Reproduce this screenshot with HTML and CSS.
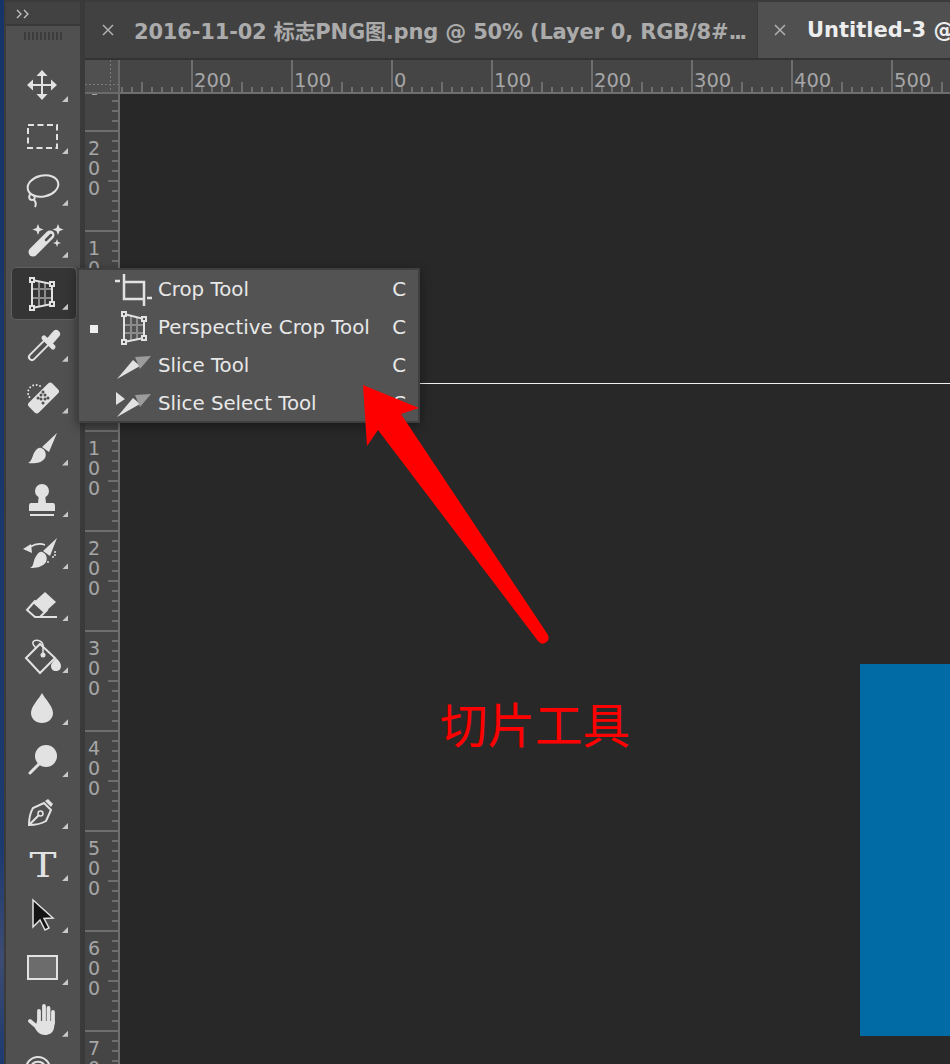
FILE: index.html

```html
<!DOCTYPE html>
<html lang="en">
<head>
    <meta charset="UTF-8">
    <title>Photoshop - Slice Tool</title>
    <link rel="stylesheet" href="styles.css">
</head>
<body>
    <div class="desktop-edge"></div>

    <aside class="toolbar">
        <div class="toolbar-head"><svg class="collapse" viewBox="0 0 14 10"><path d="M1 1l4 4-4 4M8 1l4 4-4 4"/></svg></div>
        <div class="grip"></div>
        <div class="tools">
            <div class="tool"><svg viewBox="0 0 52 52"><path class="s" d="M25 14v24M13 26h24"/><path class="f" d="M25 11l5.500 6h-11zM25 41l5.500-6h-11zM10 26l6-5.500v11zM40 26l-6-5.500v11z"/></svg></div>
            <div class="tool"><svg viewBox="0 0 52 52"><rect class="s dash" x="11" y="14" width="29" height="23"/></svg></div>
            <div class="tool"><svg viewBox="0 0 52 52"><ellipse class="s" cx="26" cy="23" rx="15.500" ry="10.500" transform="rotate(-12 26 23)"/><path class="s" d="M14 31c-3 2-2 6 1 6s4-3 1-5M17 37c2 2 2 5 1 7"/></svg></div>
            <div class="tool"><svg viewBox="0 0 52 52"><path class="s thick" d="M16 37l17-17"/><path class="s slit" d="M29 25l5-5"/><path class="f" d="M21 9l1.500 4 4 1.500-4 1.500-1.500 4-1.500-4-4-1.500 4-1.500zM41 9l1.500 4 4 1.500-4 1.500-1.500 4-1.500-4-4-1.500 4-1.500zM40 24l1 3 3 1-3 1-1 3-1-3-3-1 3-1z"/></svg></div>
            <div class="tool active"><svg viewBox="0 0 52 52"><path class="s grid" d="M22 15v24M28 16v22M15 22h20M15 31h20"/><path class="s" d="M15 13l20 4v20l-20 4z"/><path class="s handle" d="M13 11h4v4h-4zM33 15h4v4h-4zM33 35h4v4h-4zM13 39h4v4h-4z"/></svg></div>
            <div class="tool"><svg viewBox="0 0 52 52"><path class="s tube" d="M15 38l15-15"/><path class="s tube-in" d="M15 38l15-15"/><path class="s bulb" d="M33 22l6-7"/><path class="s collar" d="M27 19l9 9"/></svg></div>
            <div class="tool"><svg viewBox="0 0 52 52"><path class="s dots" d="M23 15a8 8 0 0 0-12 6c0 3 1 5 3 7"/><rect class="f" x="10" y="20" width="33" height="14" rx="3" transform="rotate(-45 26.500 27)"/><path class="s pips" d="M24 24h.01M28 28h.01M24 28h.01M28 24h.01M21 27h.01M31 27h.01M26 21h.01M26 32h.01"/></svg></div>
            <div class="tool"><svg viewBox="0 0 52 52"><path class="f" d="M40 10L32 29l-7-5zM24 25c4 1 6 6 4 10-3 5-11 6-17 5 4-2 4-6 6-10 2-3 4-6 7-5z"/></svg></div>
            <div class="tool"><svg viewBox="0 0 52 52"><circle class="f" cx="25" cy="17" r="7"/><path class="f" d="M22 20h6l1 9h-8zM14 29h22q2 0 2 3v5H12v-5q0-3 2-3zM13 40h24v2H13z"/></svg></div>
            <div class="tool"><svg viewBox="0 0 52 52"><path class="f" d="M40 12L33 30l-7-5zM25 26c4 1 6 6 4 10-3 5-10 6-16 6 4-2 3-6 5-10 2-3 4-7 7-6zM6 23l8-5 1 9z"/><path class="s thin" d="M13 21q8-5 15-2"/><path class="s dots" d="M38 26v.01M36 31v.01M31 36v.01M38 29v.01"/></svg></div>
            <div class="tool"><svg viewBox="0 0 52 52"><path class="f" d="M28 14l11 10-12 11-11-10z"/><path class="s" d="M18 23l-8 9 8 7h5l7-7zM21 39h19"/></svg></div>
            <div class="tool"><svg viewBox="0 0 52 52"><path class="s" d="M9 28l14-14 15 14-15 15z"/><path class="s thin" d="M26 25V15c-1-5-8-6-10-3-1 2 1 4 3 6"/><circle class="f" cx="26" cy="25" r="2.500"/><path class="f" d="M39 28c3 3 5 5 5 8s-2 5-5 5-5-2-5-5 3-5 5-8z"/></svg></div>
            <div class="tool"><svg viewBox="0 0 52 52"><path class="f" d="M25 11c3 6 11 13 11 20 0 6-5 10-11 10s-11-4-11-10c0-7 8-14 11-20z"/></svg></div>
            <div class="tool"><svg viewBox="0 0 52 52"><circle class="f" cx="29" cy="22" r="11"/><path class="s handle-l" d="M22 30l-9 9"/></svg></div>
            <div class="tool"><svg viewBox="0 0 52 52"><path class="f" d="M28 15l3-2 5 5-2 3z"/><path class="s" d="M27 17l7 7-5 11c-5 3-11 4-17 4 0-6 1-12 4-17zM13 38l9-9"/><circle class="s thin" cx="23.500" cy="27.500" r="2.500"/></svg></div>
            <div class="tool"><svg viewBox="0 0 52 52"><text class="type-t" x="26" y="39" text-anchor="middle" textLength="27" lengthAdjust="spacingAndGlyphs">T</text></svg></div>
            <div class="tool"><svg viewBox="0 0 52 52"><path class="cursor" d="M16 10l20 18-9 .5 5 9.500-4 2-5-10-7 7z"/></svg></div>
            <div class="tool"><svg viewBox="0 0 52 52"><rect class="s shape" x="11" y="14" width="29" height="23"/></svg></div>
            <div class="tool"><svg viewBox="0 0 52 52"><path class="s finger" d="M22 28V17M27 27V12M31.500 27V14M36 29V18M13 27l7 6"/><path class="f" d="M20 27h18l-1 7c-1 5-5 7-9 7-5 0-8-3-10-7z"/></svg></div>
            <div class="tool"><svg viewBox="0 0 52 52"><circle class="s" cx="21" cy="23" r="12"/><path class="s" d="M14 20a8 8 0 0 1 14 0"/></svg></div>
        </div>
    </aside>

    <div class="dock-gap"></div>

    <main class="document">
        <div class="tabs">
            <div class="tab">
                <svg class="tab-close" viewBox="0 0 12 12"><path d="M1 1l10 10M11 1L1 11"/></svg>
                <span class="tab-title">2016-11-02 标志PNG图.png @ 50% (Layer 0, RGB/8#<span class="tab-dots">...</span></span>
            </div>
            <div class="tab current">
                <svg class="tab-close" viewBox="0 0 12 12"><path d="M1 1l10 10M11 1L1 11"/></svg>
                <span class="tab-title">Untitled-3 @</span>
            </div>
        </div>
        <div class="workspace">
            <div class="ruler-corner"></div>
            <div class="ruler-h">
                <span>200</span><span>100</span><span>0</span><span>100</span><span>200</span><span>300</span><span>400</span><span>500</span>
            </div>
            <div class="ruler-v">
                <i class="ruler-stub"></i>
                <span>2<br>0<br>0</span>
                <span>1<br>0<br>0</span>
                <span>0</span>
                <span>1<br>0<br>0</span>
                <span>2<br>0<br>0</span>
                <span>3<br>0<br>0</span>
                <span>4<br>0<br>0</span>
                <span>5<br>0<br>0</span>
                <span>6<br>0<br>0</span>
                <span>7<br>0</span>
            </div>
            <div class="canvas">
                <div class="guide"></div>
                <div class="blue-block"></div>
                <div class="note">切片工具</div>
            </div>
        </div>
    </main>

    <div class="flyout">
        <div class="fly-row">
            <i class="bullet"></i>
            <svg viewBox="0 0 38 38"><path class="s crop" d="M9 2v25h20M0 9h5M9 10h20v24M32 26h5"/></svg>
            <span class="fly-name">Crop Tool</span>
            <span class="fly-key">C</span>
        </div>
        <div class="fly-row">
            <i class="bullet on"></i>
            <svg viewBox="0 0 38 38"><path class="s grid" d="M16 6v24M22 7v22M9 15h20M9 23h20"/><path class="s" d="M9 4l20 5v19l-20 4z"/><path class="s handle" d="M7 2h4v4H7zM27 7h4v4h-4zM27 26h4v4h-4zM7 30h4v4H7z"/></svg>
            <span class="fly-name">Perspective Crop Tool</span>
            <span class="fly-key">C</span>
        </div>
        <div class="fly-row">
            <i class="bullet"></i>
            <svg viewBox="0 0 38 38"><path class="f" d="M2 31l16-19 7 6z"/><path class="wedge" d="M20 9l16-1-11 13z"/></svg>
            <span class="fly-name">Slice Tool</span>
            <span class="fly-key">C</span>
        </div>
        <div class="fly-row">
            <i class="bullet"></i>
            <svg viewBox="0 0 38 38"><path class="f" d="M2 31l16-19 7 6zM1 6l9 7-9 6z"/><path class="wedge" d="M20 9l16-1-11 13z"/></svg>
            <span class="fly-name">Slice Select Tool</span>
            <span class="fly-key">C</span>
        </div>
    </div>

    <svg class="red-arrow" viewBox="0 0 950 1064"><path d="M363 385l56 23-18 6 147 221q2 6-3 8-4 2-7-2L378 430l-11 16z"/></svg>
</body>
</html>
```

FILE: styles.css

```css
* {
    box-sizing: border-box;
}
html, body {
    height: 100%;
}
body {
    margin: 0;
    display: flex;
    overflow: hidden;
    background: #3b3b3b;
    font-family: "DejaVu Sans", "Noto Sans CJK SC", sans-serif;
}

.desktop-edge {
    width: 4px;
    margin-right: 2px;
    background: linear-gradient(#173468, #1d3a70 80%, #3d4c72 90%, #1d3a70);
}

/* tool strip */
.toolbar {
    width: 74px;
    background: #505050;
    display: flex;
    flex-direction: column;
    flex-shrink: 0;
}
.toolbar-head {
    height: 26px;
    flex-shrink: 0;
    padding: 7px 0 0 10px;
    background: #424242;
    border-top: 2px solid #3b3b3b;
    border-bottom: 2px solid #383838;
}
.collapse {
    display: block;
    width: 14px;
    height: 10px;
}
.collapse path {
    fill: none;
    stroke: #c4c4c4;
    stroke-width: 1.300;
}
.grip {
    height: 8px;
    width: 38px;
    flex-shrink: 0;
    margin: 6px 0 0 18px;
    background: repeating-linear-gradient(90deg, #3c3c3c 0 2px, transparent 2px 4px);
}
.tools {
    margin-top: 19px;
    flex-shrink: 0;
}
.tool {
    position: relative;
    height: 51.950px;
    display: flex;
    justify-content: center;
    align-items: center;
}
.tool svg {
    width: 52px;
    height: 52px;
    flex-shrink: 0;
}
.tool::after {
    content: "";
    position: absolute;
    right: 12px;
    bottom: 9px;
    width: 6px;
    height: 6px;
    background: #c8c8c8;
    clip-path: polygon(100% 0, 100% 100%, 0 100%);
}
.tool.active::before {
    content: "";
    position: absolute;
    left: 5px;
    top: 0;
    width: 64px;
    height: 51px;
    background: #353535;
    border: 1px solid #606060;
    border-radius: 5px;
}
.tool.active svg {
    position: relative;
}

/* svg pieces */
.f {
    fill: #e2e2e2;
}
.s {
    fill: none;
    stroke: #e2e2e2;
    stroke-width: 2;
}
.s.thin {
    stroke-width: 1.500;
}
.s.dash {
    stroke-dasharray: 6 3.500;
}
.s.thick {
    stroke-width: 9;
    stroke-linecap: round;
}
.s.slit {
    stroke: #505050;
    stroke-width: 2.500;
    stroke-linecap: round;
}
.s.grid {
    stroke: #8c8c8c;
}
.s.handle {
    fill: #505050;
}
.active .s.handle {
    fill: #353535;
}
.s.tube {
    stroke-width: 8;
    stroke-linecap: round;
}
.s.tube-in {
    stroke: #505050;
    stroke-width: 4;
    stroke-linecap: round;
}
.s.bulb {
    stroke-width: 8;
    stroke-linecap: round;
}
.s.collar {
    stroke-width: 5;
    stroke-linecap: round;
}
.s.dots {
    stroke-width: 2;
    stroke-linecap: round;
    stroke-dasharray: .01 3.500;
}
.s.pips {
    stroke: #505050;
    stroke-width: 3;
    stroke-linecap: round;
}
.s.handle-l {
    stroke-width: 3;
    stroke-linecap: round;
}
.s.finger {
    stroke-width: 3.800;
    stroke-linecap: round;
}
.s.shape {
    fill: #6c6c6c;
}
.s.crop {
    stroke-width: 2.500;
}
.cursor {
    fill: #141414;
    stroke: #e2e2e2;
    stroke-width: 1.500;
}
.type-t {
    fill: #e2e2e2;
    font-family: "DejaVu Serif", serif;
    font-size: 34px;
}
.wedge {
    fill: #9c9c9c;
}

.dock-gap {
    width: 5px;
    flex-shrink: 0;
    background: #3a3a3a;
}

/* document area */
.document {
    flex: 1;
    min-width: 0;
    display: flex;
    flex-direction: column;
}
.tabs {
    height: 60px;
    display: flex;
    flex-shrink: 0;
    padding-top: 2px;
    border-bottom: 2px solid #333;
    background: #3b3b3b;
    overflow: hidden;
}
.tab {
    width: 672px;
    flex-shrink: 0;
    display: flex;
    align-items: center;
    padding-left: 17px;
    margin-right: 1px;
    background: #414141;
    color: #ababab;
    font-size: 21px;
    font-weight: bold;
    letter-spacing: -0.180px;
    white-space: nowrap;
    overflow: hidden;
}
.tab.current {
    width: 240px;
    padding-left: 16px;
    background: #505050;
    color: #ededed;
    letter-spacing: 0;
}
.tab-dots {
    letter-spacing: -2.500px;
}
.tab-close {
    width: 12px;
    height: 12px;
    flex-shrink: 0;
    margin-right: 20px;
}
.tab.current .tab-close {
    margin-right: 21px;
}
.tab-close path {
    fill: none;
    stroke: #b0b0b0;
    stroke-width: 1.500;
}

.workspace {
    flex: 1;
    min-height: 0;
    display: grid;
    grid-template-columns: 35px 1fr;
    grid-template-rows: 34px 1fr;
}
.ruler-corner {
    background:
        linear-gradient(#7a7a7a 50%, transparent 50%) 25px 0 / 1px 4px repeat-y,
        linear-gradient(90deg, #7a7a7a 50%, transparent 50%) 0 24px / 4px 1px repeat-x,
        #505050;
    background-clip: padding-box;
    border-right: 2px solid #6a6a6a;
    border-bottom: 2px solid #6a6a6a;
}
.ruler-h {
    display: flex;
    overflow: hidden;
    padding-left: 71px;
    background:
        linear-gradient(90deg, #6e6e6e 2px, transparent 2px) 21px 100% / 100px 10px repeat-x,
        linear-gradient(90deg, #6e6e6e 2px, transparent 2px) 1px 100% / 10px 5px repeat-x,
        #454545;
    background-clip: padding-box;
    border-bottom: 2px solid #6e6e6e;
    color: #a6a6a6;
    font-size: 19.500px;
    line-height: 22px;
}
.ruler-h span {
    width: 100px;
    flex-shrink: 0;
    padding: 10px 0 0 1px;
    border-left: 2px solid #6e6e6e;
}
.ruler-v {
    overflow: hidden;
    padding-top: 36px;
    position: relative;
    background:
        linear-gradient(#6e6e6e 2px, transparent 2px) 100% 86px / 10px 100px repeat-y,
        linear-gradient(#6e6e6e 2px, transparent 2px) 100% 6px / 6px 10px repeat-y,
        #454545;
    background-clip: padding-box;
    border-right: 2px solid #6e6e6e;
    color: #a6a6a6;
    font-size: 19px;
    line-height: 20px;
}
.ruler-v span {
    display: block;
    height: 100px;
    padding: 6px 0 0 3px;
    border-top: 2px solid #6e6e6e;
}
.ruler-stub {
    position: absolute;
    left: 7px;
    top: 0;
    width: 5px;
    height: 1px;
    background: #a6a6a6;
}

.canvas {
    position: relative;
    overflow: hidden;
    background: #282828;
}
.guide {
    position: absolute;
    left: 0;
    right: 0;
    top: 289px;
    height: 1px;
    background: #f0f0f0;
}
.blue-block {
    position: absolute;
    left: 740px;
    top: 570px;
    width: 100px;
    height: 372px;
    background: #006ba4;
}
.note {
    position: absolute;
    left: 320px;
    top: 599px;
    color: #f00;
    font-family: "Noto Sans CJK SC", sans-serif;
    font-size: 47.500px;
    line-height: 60px;
    white-space: nowrap;
}

/* tool flyout */
.flyout {
    position: absolute;
    left: 77px;
    top: 268px;
    width: 343px;
    height: 155px;
    padding: 2px 0;
    background: #535353;
    border: 2px solid #3f3f3f;
    box-shadow: 0 3px 10px rgba(0,0,0,0.4);
    color: #e8e8e8;
    font-size: 19.800px;
}
.fly-row {
    height: 38px;
    display: flex;
    align-items: center;
}
.bullet {
    width: 8px;
    height: 8px;
    margin: 0 17px 0 11px;
}
.bullet.on {
    background: #eee;
}
.fly-row svg {
    width: 38px;
    height: 38px;
    flex-shrink: 0;
}
.fly-row .s.handle {
    fill: #535353;
}
.fly-name {
    margin-left: 5px;
    flex: 1;
    padding-bottom: 4px;
}
.fly-key {
    margin-right: 12px;
    padding-bottom: 4px;
}

.red-arrow {
    position: absolute;
    left: 0;
    top: 0;
    width: 950px;
    height: 1064px;
    pointer-events: none;
}
.red-arrow path {
    fill: #f00;
}
```
